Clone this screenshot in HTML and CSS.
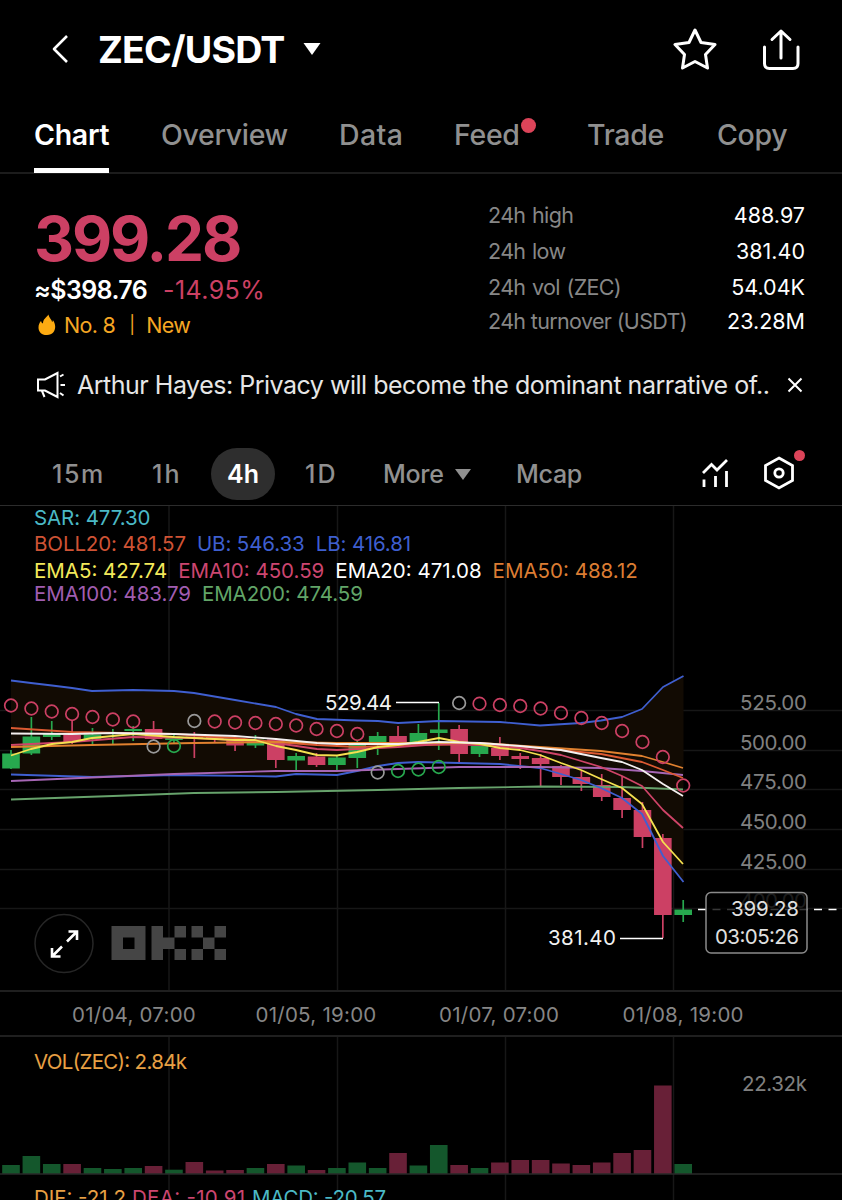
FILE: index.html
```html
<!DOCTYPE html>
<html lang="en">
<head>
  <meta charset="UTF-8">
  <meta name="viewport" content="width=device-width, initial-scale=1.0">
  <title>ZEC/USDT</title>
  <link rel="stylesheet" href="styles.css">
</head>
<body>
  <header class="topbar">
    <svg class="back" width="18" height="30" viewBox="0 0 18 30"><path d="M16 2 L3 15 L16 28"/></svg>
    <h1>ZEC/USDT</h1>
    <svg class="caret" width="18" height="12" viewBox="0 0 18 12"><path d="M0.500 0 H17.500 L9 12 Z"/></svg>
    <div class="actions">
      <svg width="44" height="44" viewBox="0 0 44 44"><path d="M22 3 L28 15.500 L42 17.500 L32.500 27.500 L34.500 41 L22 34.500 L9.500 41 L11.500 27.500 L2 17.500 L16 15.500 Z"/></svg>
      <svg width="40" height="44" viewBox="0 0 40 44"><path d="M3.500 20 V36.500 Q3.500 41.500 8.500 41.500 H32 Q37 41.500 37 36.500 V20 M20 31 V4 M11 12.500 L20 4 L29 12.500"/></svg>
    </div>
  </header>

  <nav class="tabs">
    <a class="tab active">Chart</a>
    <a class="tab overview">Overview</a>
    <a class="tab data">Data</a>
    <a class="tab feed">Feed<span class="dot"></span></a>
    <a class="tab trade">Trade</a>
    <a class="tab copy">Copy</a>
  </nav>

  <main>
    <section class="ticker">
      <div class="quote">
        <div class="price">399.28</div>
        <div class="sub"><span class="usd">≈$398.76</span><span class="change">-14.95%</span></div>
        <div class="rank">
          <svg width="18" height="22" viewBox="0 0 18 22"><path d="M10.500 0.500 C11 4 14 5.500 14 8 Q15 7.500 14.800 6 C19 11 18 21 9 21 C-1 21 -1 11 3 7 Q3.500 9 5 9.500 C5 5 8 4 10.500 0.500 Z"/></svg>
          <span>No. 8</span><span class="bar">|</span><span>New</span>
        </div>
      </div>
      <dl class="stats">
        <dt>24h high</dt><dd>488.97</dd>
        <dt>24h low</dt><dd>381.40</dd>
        <dt>24h vol (ZEC)</dt><dd>54.04K</dd>
        <dt>24h turnover (USDT)</dt><dd>23.28M</dd>
      </dl>
    </section>

    <section class="news">
      <svg width="30" height="28" viewBox="0 0 30 28"><path d="M2 8.500 H9 L21.500 2 V26 L9 19.500 H2 Z M6 20 L8.500 26 M24 5.500 L27.500 3.500 M24.500 14 H29 M24 22 L27.500 24.500"/></svg>
      <p>Arthur Hayes: Privacy will become the dominant narrative of..</p>
      <svg class="close" width="16" height="16" viewBox="0 0 16 16"><path d="M1.500 1.500 L14.500 14.500 M14.500 1.500 L1.500 14.500"/></svg>
    </section>

    <section class="intervals">
      <a class="m15">15m</a>
      <a class="h1">1h</a>
      <a class="h4">4h</a>
      <a class="d1">1D</a>
      <a class="more">More <svg width="16" height="11" viewBox="0 0 16 11"><path d="M0 0 H16 L8 11 Z"/></svg></a>
      <a class="mcap">Mcap</a>
      <div class="tools">
        <svg width="28" height="32" viewBox="0 0 28 32"><path d="M2 15 L10.500 6.500 L16 12 L26 2 M3 21.500 V29 M14.500 18 V29 M25.500 13 V29"/></svg>
        <span class="setting">
          <svg width="32" height="34" viewBox="0 0 32 34"><path d="M16 2 L29.500 9.500 V24.500 L16 32 L2.500 24.500 V9.500 Z"/><circle cx="16" cy="17" r="4.200"/></svg>
          <span class="dot"></span>
        </span>
      </div>
    </section>

    <section class="chart">
      <svg width="842" height="484" viewBox="0 506 842 484">
        <path class="grid" d="M0 710.500 H842 M0 750.500 H842 M0 789.500 H842 M0 829.500 H842 M0 869.500 H842 M0 908.500 H842 M169 506 V990 M337.500 506 V990 M505.500 506 V990 M673.500 506 V990"/>
        <path class="band" d="M11 680.500 L31 683 L52 685.500 L72 688 L92 691 L133 690 L174 691 L194 693 L235 700 L276 707 L296 714 L317 719 L357 720.500 L378 721 L398 723 L439 721 L500 722 L540 725.500 L581 723 L601 720.500 L622 717 L642 709 L663 687 L683.500 676 V882 L663 856 L642 814 L622 798 L601 788 L581 780 L561 774 L540 768 L500 764 L418 762 L398 763 L378 766 L357 771 L337 775 L296 774 L276 776.500 L174 775 L92 777 L11 774.500 Z"/>

        <g class="logo">
          <path d="M111.500 926 H145.500 V960 H111.500 Z M123 937.500 V949 H134.500 V937.500 Z"/>
          <path d="M151.500 926 H163 V937.500 H174.500 V949 H163 V960 H151.500 Z M174.500 926 H186 V937.500 H174.500 Z M174.500 949 H186 V960 H174.500 Z"/>
          <path d="M191.500 926 H203 V937.500 H191.500 Z M214.500 926 H226 V937.500 H214.500 Z M203 937.500 H214.500 V949 H203 Z M191.500 949 H203 V960 H191.500 Z M214.500 949 H226 V960 H214.500 Z"/>
        </g>

        <g id="candles"></g>

        <g class="lines">
          <polyline class="ema200" points="11,799.500 113,796 194,793 276,792 378,790 459,788 540,786.500 622,787 683,789.500"/>
          <polyline class="blue" points="11,680.500 31,683 52,685.500 72,688 92,691 133,690 174,691 194,693 235,700 276,707 296,714 317,719 357,720.500 378,721 398,723 439,721 500,722 540,725.500 581,723 601,720.500 622,717 642,709 663,687 683.500,676"/>
          <polyline class="blue" points="11,774.500 92,777 174,775 276,776.500 296,774 337,775 357,771 378,766 398,763 418,762 500,764 540,768 561,774 581,780 601,788 622,798 642,814 663,856 683.500,882"/>
          <polyline class="ema100" points="11,781 92,777.500 174,774 276,771 337,771 398,769 459,767 540,767 601,768 642,771 683,775"/>
          <polyline class="boll" points="11,728 72,732 174,734 235,738 276,742 317,745 357,747 418,745 480,744 540,748 601,754 642,762 663,770 683,778"/>
          <polyline class="ema10" points="11,745 72,742 133,737 194,738 235,740 276,743 317,749 337,750 357,749 398,747 439,744 480,745 520,748 540,751 561,755 581,761 601,767 622,776 642,786 663,810 683,828"/>
          <polyline class="ema50" points="11,747 92,745 194,743 276,742 337,743 480,743 540,747 601,751 642,756 663,762 683,768"/>
          <polyline class="ema5" points="11,755.500 31,749 52,744 72,742 92,738 113,736 133,734 174,737 235,740 255,740 276,746 296,750 317,755 337,755.500 357,752 378,747 398,745 418,742 439,738 459,742 480,744 500,748 520,750 540,755 561,763 581,770 601,779 622,788 642,804 663,842 683,864"/>
          <polyline class="ema20" points="11,733.500 72,734 113,733 174,734 235,736 276,739 317,743 337,744 398,744 439,742 480,743 520,746 540,748 561,750 581,754 601,758 622,762 642,770 663,784 683,796"/>
        </g>

        <g id="sar"></g>

        <path class="mark" d="M396 702.500 H439 M620 938.500 H663"/>
        <text class="peak" x="325" y="710" textLength="67">529.44</text>
        <text class="peak" x="548" y="945" textLength="68">381.40</text>

        <g class="ylabels">
          <text x="740" y="710" textLength="67">525.00</text>
          <text x="740" y="750" textLength="67">500.00</text>
          <text x="740" y="789" textLength="67">475.00</text>
          <text x="740" y="829" textLength="67">450.00</text>
          <text x="740" y="868.500" textLength="67">425.00</text>
          <text x="740" y="908" textLength="67">400.00</text>
        </g>

        <path class="dash" d="M698 909.500 H842"/>
        <rect class="tag" x="706" y="892.500" width="101" height="60.500" rx="5"/>
        <text class="tagtext" x="731" y="916" textLength="68">399.28</text>
        <text class="tagtext" x="715" y="943.500" textLength="84">03:05:26</text>

        <circle class="expand" cx="64" cy="943.500" r="29"/>
        <path class="arrows" d="M67 941.500 L77 931.500 M68.500 931.500 H77 V940 M62 946.500 L52 956.500 M52 948 V956.500 H60.500"/>
      </svg>

      <div class="legend">
        <p class="l1"><span class="c-sar">SAR: 477.30</span></p>
        <p class="l2"><span class="c-boll">BOLL20: 481.57</span><span class="c-blue">UB: 546.33</span><span class="c-blue">LB: 416.81</span></p>
        <p class="l3"><span class="c-ema5">EMA5: 427.74</span><span class="c-ema10">EMA10: 450.59</span><span class="c-ema20">EMA20: 471.08</span><span class="c-ema50">EMA50: 488.12</span></p>
        <p class="l4"><span class="c-ema100">EMA100: 483.79</span><span class="c-ema200">EMA200: 474.59</span></p>
      </div>
    </section>

    <section class="dates">
      <span>01/04, 07:00</span>
      <span>01/05, 19:00</span>
      <span>01/07, 07:00</span>
      <span>01/08, 19:00</span>
    </section>

    <section class="volume">
      <svg width="842" height="163" viewBox="0 1037 842 163">
        <path class="grid" d="M169 1037 V1200 M337.500 1037 V1200 M505.500 1037 V1200 M673.500 1037 V1200"/>
        <g id="bars"></g>
        <path class="divider" d="M0 1174 H842"/>
        <text class="vol" x="34" y="1068.500" textLength="153">VOL(ZEC): 2.84k</text>
        <text class="volmax" x="742" y="1091" textLength="65">22.32k</text>
        <text class="macd m1" x="34" y="1205" textLength="92">DIF: -21.2</text>
        <text class="macd m2" x="132" y="1205" textLength="113">DEA: -10.91</text>
        <text class="macd m3" x="252" y="1205" textLength="134">MACD: -20.57</text>
      </svg>
    </section>
  </main>
  <script src="script.js"></script>
</body>
</html>
```
FILE: styles.css
```css
* {
  box-sizing: border-box;
}

body {
  margin: 0;
  width: 842px;
  height: 1200px;
  overflow: hidden;
  background-color: #000;
  color: #fff;
  font-family: Inter, "Liberation Sans", sans-serif;
}

h1, p, dl, dd {
  margin: 0;
}

svg {
  display: block;
  flex: none;
}

/* Header */
.topbar {
  display: flex;
  align-items: center;
  height: 98px;
  padding: 0 41px 0 51px;
}

.topbar svg path,
.news path {
  fill: none;
  stroke: #fff;
  stroke-width: 3;
  stroke-linejoin: round;
  stroke-linecap: round;
}

.topbar .back path {
  stroke-width: 2.6;
  stroke-linecap: butt;
}

.topbar h1 {
  margin-left: 29px;
  width: 186px;
  font-size: 37.5px;
  font-weight: 700;
  letter-spacing: -0.8px;
  white-space: nowrap;
}

.topbar .caret {
  margin-left: 19px;
}

.topbar .caret path {
  fill: #fff;
  stroke: none;
}

.actions {
  display: flex;
  align-items: center;
  gap: 44px;
  margin-left: auto;
}

/* Tabs */
.tabs {
  display: flex;
  height: 76px;
  padding: 0 34px;
  border-bottom: 2px solid #1c1c1c;
}

.tab {
  position: relative;
  height: 75px;
  padding-top: 19px;
  color: #909090;
  font-size: 28.5px;
  line-height: 36px;
  font-weight: 500;
  letter-spacing: -0.3px;
  white-space: nowrap;
}

.tab.active {
  width: 75px;
  color: #fff;
  font-weight: 600;
  border-bottom: 5px solid #fff;
}

.overview { margin-left: 52px; width: 127px; }
.data { margin-left: 51px; width: 64px; letter-spacing: 0.4px; }
.feed { margin-left: 51px; width: 68px; }
.trade { margin-left: 65px; width: 76px; }
.copy { margin-left: 54px; }

.dot {
  position: absolute;
  border-radius: 50%;
  background-color: #dc4459;
}

.feed .dot {
  top: 20px;
  right: -14px;
  width: 15px;
  height: 15px;
}

/* Price and 24h stats */
.ticker {
  display: flex;
  justify-content: space-between;
  height: 180px;
  padding: 24px 37px 0 34px;
}

.price {
  margin-top: 8px;
  height: 66px;
  line-height: 66px;
  color: #cc4064;
  font-size: 62px;
  font-weight: 700;
  letter-spacing: -2.1px;
}

.sub {
  display: flex;
  gap: 16px;
  margin-top: 2px;
  font-size: 25px;
  line-height: 32px;
}

.usd {
  font-weight: 600;
  letter-spacing: -0.6px;
}

.change {
  color: #cc4064;
  letter-spacing: 0.4px;
}

.rank {
  display: flex;
  align-items: center;
  margin-top: 4px;
  padding-left: 4px;
  color: #f5a623;
  font-size: 21.5px;
  line-height: 30px;
  letter-spacing: -0.7px;
}

.rank svg {
  fill: #fdab12;
  margin-right: 8px;
}

.rank .bar {
  margin: 0 12px 0 14px;
  font-size: 17.5px;
}

.stats {
  display: grid;
  grid-template-columns: 1fr auto;
  grid-template-rows: 36px 36px 34px 34px;
  width: 317px;
  margin-top: -1px;
  line-height: 36px;
  font-size: 21.5px;
}

.stats dt {
  color: #878787;
  letter-spacing: -0.65px;
  word-spacing: 1.2px;
}

.stats dt:last-of-type {
  word-spacing: 0;
}

.stats dd {
  text-align: right;
}

/* News line */
.news {
  display: flex;
  align-items: center;
  height: 62px;
  padding: 0 39px 0 36px;
}

.news path {
  stroke-width: 2;
  stroke-linecap: butt;
  stroke-linejoin: miter;
}

.news p {
  margin-left: 11px;
  color: #e6e6e6;
  font-size: 25px;
  letter-spacing: -0.49px;
  white-space: nowrap;
}

.news .close {
  margin-left: auto;
}

/* Interval switcher */
.intervals {
  display: flex;
  align-items: center;
  height: 90px;
  padding: 26px 47px 0 52px;
  border-bottom: 1px solid #2c2c2c;
  color: #909090;
  font-size: 25px;
  font-weight: 500;
}

.m15 { width: 54px; letter-spacing: 1.6px; }
.h1 { margin-left: 46px; width: 29px; letter-spacing: 2px; }
.d1 { margin-left: 30px; width: 32px; letter-spacing: 2px; }
.mcap { margin-left: 45px; letter-spacing: -0.3px; }

.h4 {
  margin-left: 30px;
  width: 64px;
  height: 52px;
  border-radius: 26px;
  line-height: 52px;
  background-color: #2e2e2e;
  color: #fff;
  font-weight: 600;
  text-align: center;
}

.more {
  display: flex;
  align-items: center;
  gap: 11px;
  margin-left: 46px;
  width: 88px;
  letter-spacing: -0.3px;
}

.more svg {
  margin-top: 2px;
  fill: #909090;
}

.tools {
  display: flex;
  align-items: center;
  gap: 34px;
  margin-left: auto;
}

.tools path,
.tools circle {
  fill: none;
  stroke: #fff;
  stroke-width: 2.8;
}

.setting {
  position: relative;
  top: -1px;
}

.setting .dot {
  top: -6px;
  right: -10px;
  width: 11px;
  height: 11px;
}

/* Main chart */
.chart {
  position: relative;
  height: 484px;
}

.chart text,
.volume text {
  font-size: 20.5px;
  fill: #808080;
}

.grid {
  fill: none;
  stroke: #171717;
  stroke-width: 1.5;
}

.band { fill: #120b03; }

.logo {
  fill: #454545;
  fill-rule: evenodd;
}

.lines polyline {
  fill: none;
  stroke-width: 1.8;
  stroke-linejoin: round;
}

.lines .blue { stroke: #3f5fd0; }
.lines .boll { stroke: #dc5a32; }
.lines .ema5 { stroke: #f5e050; }
.lines .ema10 { stroke: #cf4468; }
.lines .ema20 { stroke: #f4f0f0; }
.lines .ema50 { stroke: #e0812f; }
.lines .ema100 { stroke: #a666b4; }
.lines .ema200 { stroke: #67a36c; }

.up { fill: #27a84e; stroke: #27a84e; }
.down { fill: #cc4064; stroke: #cc4064; }
.body { stroke: none; }
.wick { stroke-width: 1.7; }

#sar circle {
  fill: none;
  stroke-width: 1.7;
}

#sar .flip { stroke: #999; }

.mark {
  fill: none;
  stroke: #fff;
  stroke-width: 1.7;
}

.chart .peak { fill: #f2f2f2; }

.dash {
  stroke: #fff;
  stroke-width: 1.7;
  stroke-dasharray: 8 6.5;
}

.tag {
  fill: rgba(0, 0, 0, 0.78);
  stroke: #8a8a8a;
  stroke-width: 1.5;
}

.chart .tagtext { fill: #e0e0e0; }

.expand {
  fill: #000;
  stroke: #262626;
  stroke-width: 1.5;
}

.arrows {
  fill: none;
  stroke: #fff;
  stroke-width: 2.6;
}

/* Indicator values printed over the chart */
.legend {
  position: absolute;
  top: 0;
  left: 34px;
  font-size: 20.5px;
  line-height: 24px;
}

.legend p {
  display: flex;
  gap: 11px;
  white-space: nowrap;
}

.legend .l1,
.legend .l2 {
  letter-spacing: -0.1px;
}

.legend .l2 {
  margin-top: 2px;
}

.legend .l3 {
  margin-top: 3px;
}

.legend .l4 {
  margin-top: -1px;
  letter-spacing: -0.08px;
}

.c-sar { color: #4bb9c6; }
.c-boll { color: #cf5335; }
.c-blue { color: #3e5fcf; }
.c-ema5 { color: #f3e95a; }
.c-ema10 { color: #cc4670; }
.c-ema20 { color: #fff; }
.c-ema50 { color: #dc7d33; }
.c-ema100 { color: #a05db0; }
.c-ema200 { color: #62a568; }

/* Time axis */
.dates {
  display: flex;
  gap: 61px;
  height: 47px;
  padding-left: 72px;
  border-top: 2px solid #1f1f1f;
  border-bottom: 2px solid #1f1f1f;
  color: #868686;
  font-size: 20.5px;
  line-height: 45px;
  letter-spacing: 0.25px;
}

.dates span {
  width: 122.500px;
  white-space: nowrap;
}

/* Volume */
.divider {
  stroke: #292929;
  stroke-width: 1.5;
}

.vup { fill: #14572c; }
.vdown { fill: #682037; }

.volume .vol, .volume .m1 { fill: #e8a044; }
.volume .m2 { fill: #cc4670; }
.volume .m3 { fill: #4bb9c6; }
```
FILE: script.js
```js
// [direction, body top, body bottom, wick top, wick bottom, volume top]
const candles = [
  ['up', 753.5, 768.5, 750, 769, 1165],
  ['up', 736.5, 753.5, 717, 755, 1156],
  ['up', 734, 737, 721, 740, 1164],
  ['down', 735, 742, 720, 744, 1164],
  ['up', 734.5, 739, 728, 746, 1168],
  ['up', 732, 733.5, 729, 744, 1169],
  ['up', 729, 731, 726, 741, 1168],
  ['down', 729, 739, 721, 740, 1166],
  ['up', 737.5, 740, 735, 743, 1169.7],
  ['down', 736.5, 738, 732, 758, 1162],
  ['down', 737, 739, 736, 742, 1170.5],
  ['down', 739, 745.5, 738, 751, 1170],
  ['up', 739.5, 745.5, 735, 748, 1168],
  ['down', 739.5, 760, 738, 768, 1164],
  ['up', 756, 760.5, 753, 770, 1165.5],
  ['down', 756.5, 765, 753, 767, 1170],
  ['up', 757.5, 765, 755, 772, 1168],
  ['up', 745, 758, 740, 768, 1162.5],
  ['up', 736, 744, 732, 755, 1168],
  ['down', 736, 742, 726, 743, 1153],
  ['up', 733, 742, 724, 743, 1165.5],
  ['up', 729.5, 733, 703, 750, 1145],
  ['down', 729, 754, 725, 762, 1165],
  ['up', 746, 754, 743, 757, 1168],
  ['down', 748, 756, 737, 760, 1162.5],
  ['down', 756, 759, 753, 769, 1160],
  ['down', 758, 764, 754, 786, 1160],
  ['down', 766, 777, 765, 785, 1163.5],
  ['down', 777, 784, 771, 791, 1165],
  ['down', 785, 797, 774, 801, 1162.5],
  ['down', 798, 810, 776, 818, 1153],
  ['down', 810, 837, 802, 848, 1150],
  ['down', 838, 915, 834, 938, 1085.5],
  ['up', 909.5, 915, 900, 922, 1164]
];

const sar = [705.5, 708.5, 711.5, 714, 717, 719.5, 721.5, 746.5, 746, 721, 721.5, 722.5,
  723, 724, 725.5, 729, 731, 734, 772.5, 771, 769.5, 767, 703, 703.7, 705, 706, 708.5,
  713, 718, 723, 731, 742, 757, 785.5];
const flips = [7, 9, 18, 22];
const rising = [8, 19, 20, 21];

const step = 20.37;
let candleHtml = '';
let barHtml = '';
let sarHtml = '';

candles.forEach(function(c, i) {
  const x = 11 + i * step;
  candleHtml += `<path class="wick ${c[0]}" d="M${x} ${c[3]} V${c[4]}"/>`;
  candleHtml += `<rect class="body ${c[0]}" x="${x - 8.8}" y="${c[1]}" width="17.6" height="${c[2] - c[1]}"/>`;
  barHtml += `<rect class="v${c[0]}" x="${x - 8.8}" y="${c[5]}" width="17.6" height="${1174 - c[5]}"/>`;
});

sar.forEach(function(y, i) {
  let cls = 'down';
  if (flips.includes(i)) cls = 'flip';
  if (rising.includes(i)) cls = 'up';
  sarHtml += `<circle class="${cls}" cx="${11 + i * step}" cy="${y}" r="6.3"/>`;
});

document.getElementById('candles').innerHTML = candleHtml;
document.getElementById('bars').innerHTML = barHtml;
document.getElementById('sar').innerHTML = sarHtml;
```
